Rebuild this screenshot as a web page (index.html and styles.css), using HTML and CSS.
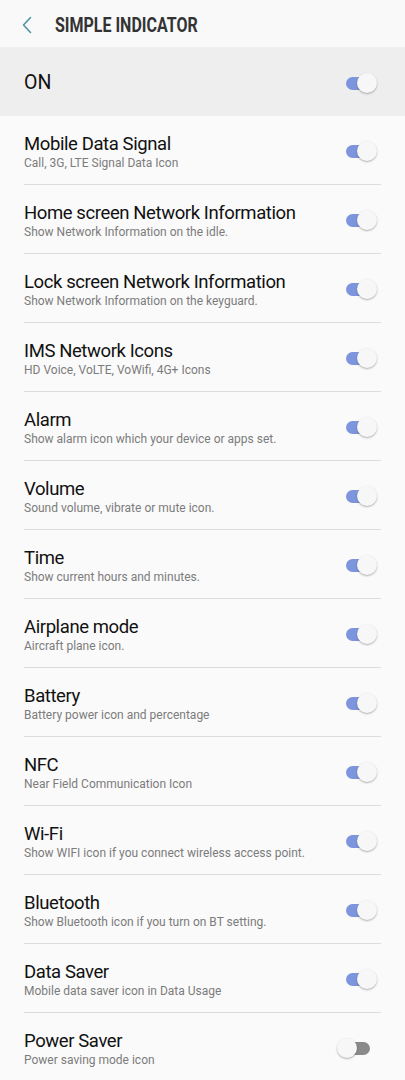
FILE: index.html
```html
<!DOCTYPE html>
<html lang="en">
<head>
  <meta charset="UTF-8">
  <title>Simple Indicator</title>
  <link rel="stylesheet" href="styles.css">
</head>
<body>
<div class="header">
  <svg class="back" width="12" height="18" viewBox="0 0 12 18">
    <path d="M9.5 1.5 L2.5 9 L9.5 16.5" fill="none" stroke="#4f94a6" stroke-width="1.6" stroke-linecap="round" stroke-linejoin="round"/>
  </svg>
  <h1>SIMPLE INDICATOR</h1>
</div>

<div class="master">
  <span>ON</span>
  <div class="switch on"><div class="track"></div><div class="thumb"></div></div>
</div>

<ul class="list">
  <li class="item">
    <div class="text"><div class="title">Mobile Data Signal</div><div class="sub">Call, 3G, LTE Signal Data Icon</div></div>
    <div class="switch on"><div class="track"></div><div class="thumb"></div></div>
  </li>
  <li class="item">
    <div class="text"><div class="title">Home screen Network Information</div><div class="sub">Show Network Information on the idle.</div></div>
    <div class="switch on"><div class="track"></div><div class="thumb"></div></div>
  </li>
  <li class="item">
    <div class="text"><div class="title">Lock screen Network Information</div><div class="sub">Show Network Information on the keyguard.</div></div>
    <div class="switch on"><div class="track"></div><div class="thumb"></div></div>
  </li>
  <li class="item">
    <div class="text"><div class="title">IMS Network Icons</div><div class="sub">HD Voice, VoLTE, VoWifi, 4G+ Icons</div></div>
    <div class="switch on"><div class="track"></div><div class="thumb"></div></div>
  </li>
  <li class="item">
    <div class="text"><div class="title">Alarm</div><div class="sub">Show alarm icon which your device or apps set.</div></div>
    <div class="switch on"><div class="track"></div><div class="thumb"></div></div>
  </li>
  <li class="item">
    <div class="text"><div class="title">Volume</div><div class="sub">Sound volume, vibrate or mute icon.</div></div>
    <div class="switch on"><div class="track"></div><div class="thumb"></div></div>
  </li>
  <li class="item">
    <div class="text"><div class="title">Time</div><div class="sub">Show current hours and minutes.</div></div>
    <div class="switch on"><div class="track"></div><div class="thumb"></div></div>
  </li>
  <li class="item">
    <div class="text"><div class="title">Airplane mode</div><div class="sub">Aircraft plane icon.</div></div>
    <div class="switch on"><div class="track"></div><div class="thumb"></div></div>
  </li>
  <li class="item">
    <div class="text"><div class="title">Battery</div><div class="sub">Battery power icon and percentage</div></div>
    <div class="switch on"><div class="track"></div><div class="thumb"></div></div>
  </li>
  <li class="item">
    <div class="text"><div class="title">NFC</div><div class="sub">Near Field Communication Icon</div></div>
    <div class="switch on"><div class="track"></div><div class="thumb"></div></div>
  </li>
  <li class="item">
    <div class="text"><div class="title">Wi-Fi</div><div class="sub">Show WIFI icon if you connect wireless access point.</div></div>
    <div class="switch on"><div class="track"></div><div class="thumb"></div></div>
  </li>
  <li class="item">
    <div class="text"><div class="title">Bluetooth</div><div class="sub">Show Bluetooth icon if you turn on BT setting.</div></div>
    <div class="switch on"><div class="track"></div><div class="thumb"></div></div>
  </li>
  <li class="item">
    <div class="text"><div class="title">Data Saver</div><div class="sub">Mobile data saver icon in Data Usage</div></div>
    <div class="switch on"><div class="track"></div><div class="thumb"></div></div>
  </li>
  <li class="item">
    <div class="text"><div class="title">Power Saver</div><div class="sub">Power saving mode icon</div></div>
    <div class="switch off"><div class="track"></div><div class="thumb"></div></div>
  </li>
</ul>
</body>
</html>
```
FILE: styles.css
```css
body {
  margin: 0;
  font-family: Roboto, "Noto Sans", sans-serif;
  background-color: #fafafa;
  color: #111;
}

.header {
  height: 47px;
  display: flex;
  align-items: center;
  background-color: #f9f9f9;
  padding-left: 21px;
}

.back {
  display: block;
  margin-top: 2px;
}

/* condensed bold title, no condensed face installed */
.header h1 {
  margin: 3px 0 0 22px;
  font-size: 19.5px;
  font-weight: 700;
  color: #333;
  transform: scaleX(0.82);
  transform-origin: left center;
  white-space: nowrap;
}

.master {
  height: 69px;
  display: flex;
  align-items: center;
  justify-content: space-between;
  background-color: #eeeeee;
  padding: 0 27px 0 24px;
  font-size: 19.5px;
}

.master span {
  padding-top: 1px;
}

.list {
  list-style: none;
  margin: 0;
  padding: 0 24px;
}

.item {
  height: 68px;
  display: flex;
  align-items: center;
  justify-content: space-between;
  border-bottom: 1px solid #dcdcdc;
  padding-right: 3px;
}

.text {
  padding-top: 4px;
}

.title {
  font-size: 18.5px;
  letter-spacing: -0.4px;
  line-height: 22px;
  color: #111;
}

.sub {
  font-size: 12px;
  line-height: 16px;
  color: #7c7c7c;
}

.switch {
  position: relative;
  width: 41px;
  height: 21px;
  flex-shrink: 0;
  margin-top: 3px;
}

.track {
  position: absolute;
  left: 9px;
  top: 4px;
  width: 24px;
  height: 13px;
  border-radius: 7px;
  background-color: #7d95dc;
}

.thumb {
  position: absolute;
  top: 0;
  width: 20px;
  height: 20px;
  border-radius: 50%;
  background-color: #f7f7f7;
  box-shadow: 0 1px 2px rgba(0,0,0,0.3);
}

.switch.on .thumb {
  left: 20px;
}

.switch.off .thumb {
  left: 0;
}

.switch.off .track {
  background-color: #8a8a8a;
}
```
